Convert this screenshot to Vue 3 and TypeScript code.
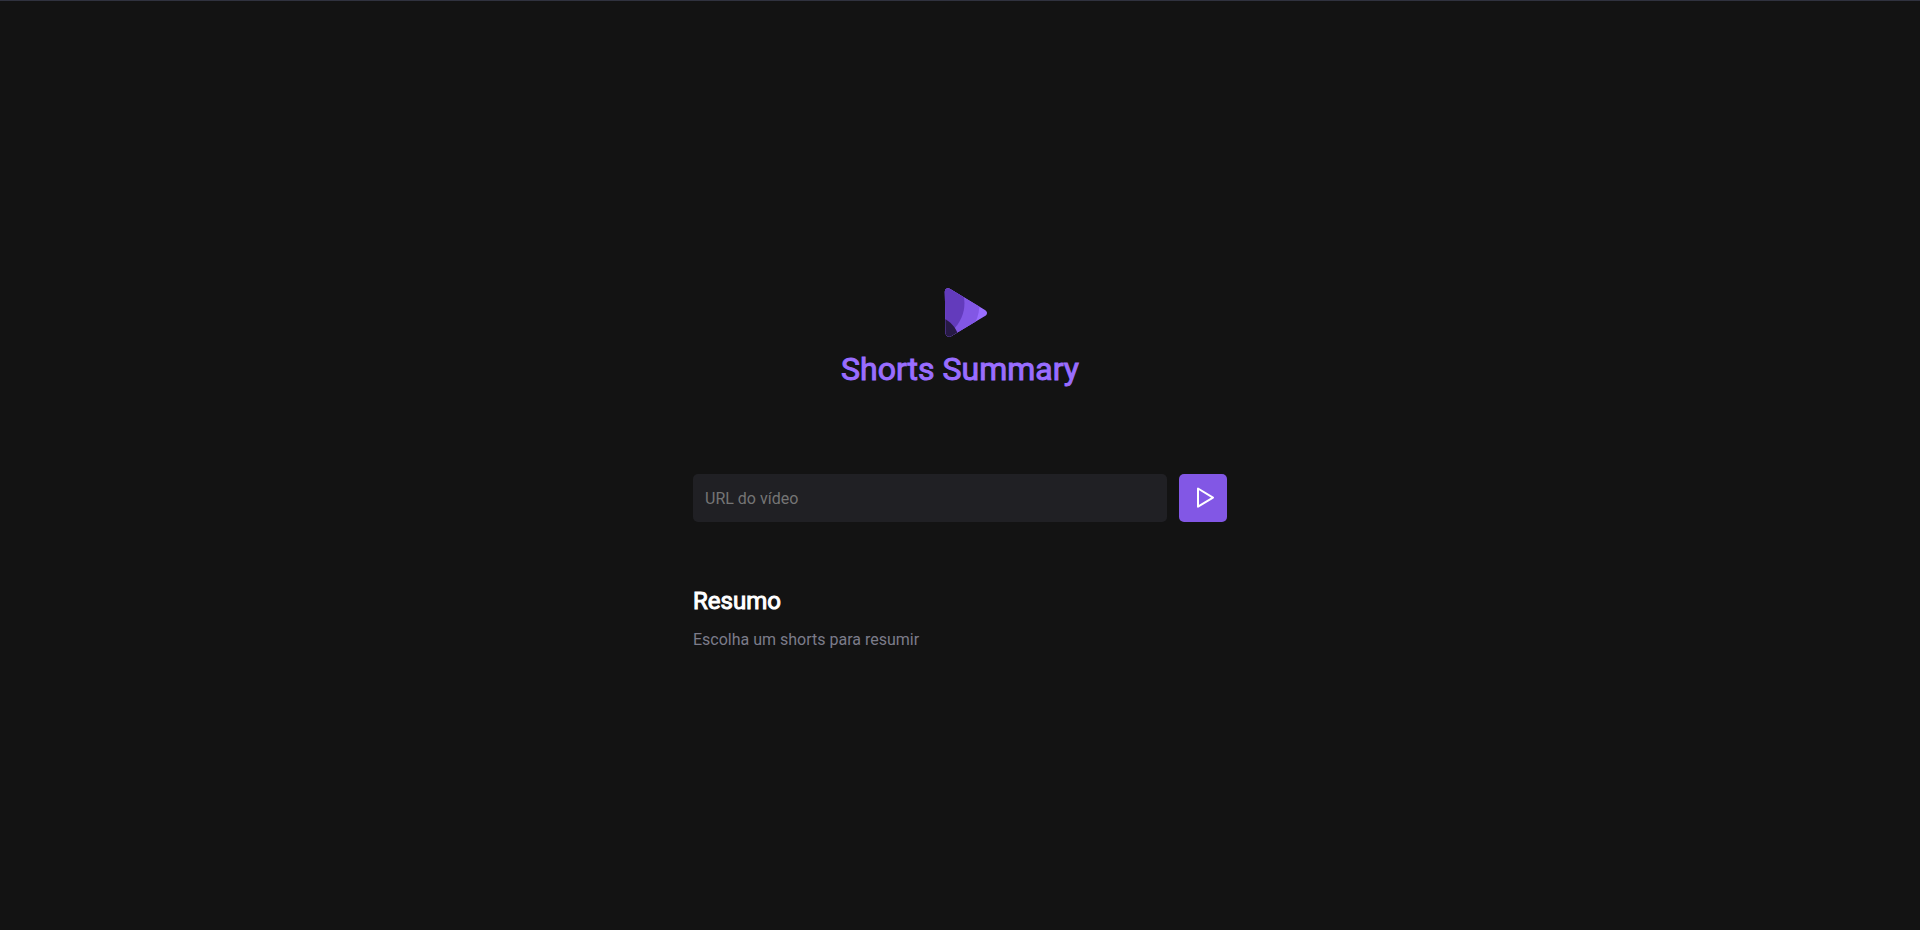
<script setup lang="ts">
import { ref } from 'vue'

const url = ref('')
const summary = ref('Escolha um shorts para resumir')
</script>

<template>
  <div class="page">
    <main class="app">
      <header class="brand">
        <svg class="logo" viewBox="0 0 64 64" aria-hidden="true">
          <defs>
            <clipPath id="logo-shape">
              <path d="M16.800 11.800C16.800 8.800 19.600 7.400 22.200 9L57 30C59.700 31.600 59.700 34.400 57 36.100L23.200 56.200C20.600 57.700 17.700 56.200 17.600 53.200Z" />
            </clipPath>
          </defs>
          <g clip-path="url(#logo-shape)">
            <rect width="64" height="64" fill="#996dff" />
            <path d="M0 0H48C51.500 13 54 28 47.500 42L36 64H0Z" fill="#8257e5" />
            <path d="M0 0H30L36 18C37.700 29 34.500 41 24 51L0 64Z" fill="#633bbc" />
            <path d="M0 38H14C21 40 27 46 30 54V64H0Z" fill="#271a45" />
          </g>
        </svg>
        <h1>Shorts Summary</h1>
      </header>
      <form class="search" @submit.prevent>
        <input v-model="url" type="url" placeholder="URL do vídeo" aria-label="URL do vídeo" />
        <button type="submit" aria-label="Resumir">
          <svg viewBox="0 0 24 24" aria-hidden="true">
            <path d="M7 2.500v18.200l15-9.100z" />
          </svg>
        </button>
      </form>
      <section>
        <h2>Resumo</h2>
        <p>{{ summary }}</p>
      </section>
    </main>
  </div>
</template>

<style>
body {
  margin: 0;
  background: #131313;
}
</style>

<style scoped>
.page {
  box-sizing: border-box;
  min-height: 100vh;
  padding: 0 16px;
  display: grid;
  place-items: center;
  border-top: 1px solid #30323f;
  background: #131313;
  color: #fff;
  font: 16px/24px Roboto, sans-serif;
}
.app {
  width: 100%;
  max-width: 534px;
}
.brand {
  display: flex;
  flex-direction: column;
  align-items: center;
  margin-bottom: 80px;
}
.logo {
  width: 64px;
  height: 64px;
}
h1,
h2,
p {
  margin: 0;
}
h1,
h2 {
  font-weight: 400;
  -webkit-text-stroke: 1px currentColor;
}
h1 {
  color: #996dff;
  font-size: 32px;
  line-height: 50px;
}
.search {
  display: flex;
  gap: 12px;
  margin-bottom: 64px;
}
input {
  box-sizing: border-box;
  flex: 1;
  min-width: 0;
  height: 48px;
  padding: 2px 12px 0;
  border: 0;
  border-radius: 5px;
  background: #202024;
  color: #fff;
  font: inherit;
}
input::placeholder {
  color: #757575;
}
button {
  display: grid;
  place-items: center;
  width: 48px;
  height: 48px;
  padding: 0;
  border: 0;
  border-radius: 5px;
  background: #8257e5;
  cursor: pointer;
}
button svg {
  width: 24px;
  height: 24px;
  fill: none;
  stroke: #fff;
  stroke-width: 2;
  stroke-linejoin: round;
}
h2 {
  font-size: 24px;
  line-height: 30px;
  margin-bottom: 12px;
}
p {
  color: #7c7c8a;
}
</style>
